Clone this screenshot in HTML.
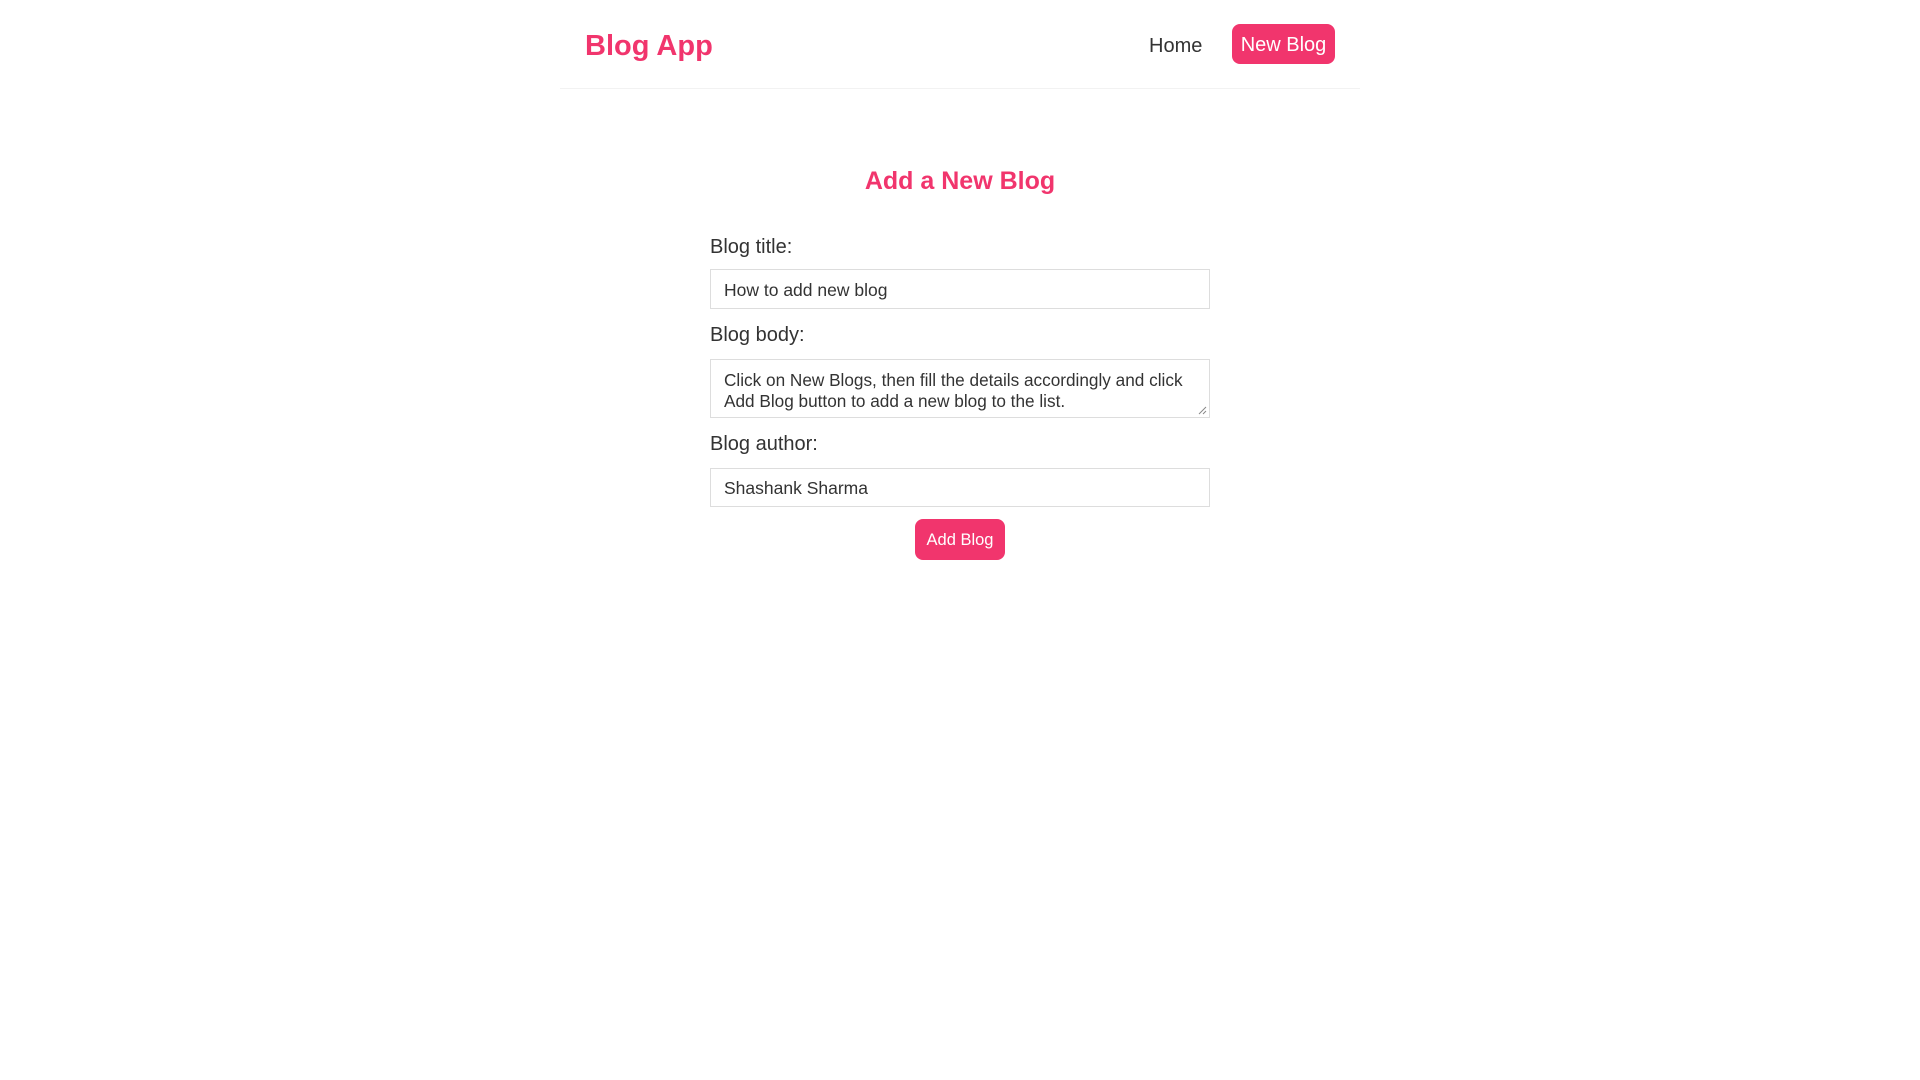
<!DOCTYPE html>
<html><head><meta charset="utf-8"><style>
*{box-sizing:border-box;margin:0;padding:0}
body{width:1920px;height:1080px;background:#fff;font-family:"Liberation Sans",sans-serif;color:#333;position:relative;overflow:hidden}
.a{position:absolute;white-space:nowrap}
.logo{left:585px;top:29px;font-size:29px;font-weight:bold;color:#f1356d;line-height:34px}
.home{left:1149px;top:34px;font-size:20px;line-height:24px;color:#333}
.nb{left:1232px;top:24px;width:103px;height:40px;background:#f1356d;border-radius:8px;color:#fff;font-size:20px;line-height:42px;text-align:center}
.line{left:560px;top:88px;width:800px;height:1px;background:#f2f2f2}
h2{position:absolute;left:0;width:1920px;text-align:center;top:166px;font-size:25px;line-height:30px;color:#f1356d}
.lbl{left:710px;font-size:20px;line-height:24px;color:#333}
.box{left:710px;width:500px;border:1px solid #ddd;font-size:17.5px;color:#333;padding:0 13px}
.btn{left:915px;top:519px;width:90px;height:41px;background:#f1356d;border-radius:8px;color:#fff;font-size:16.5px;line-height:43px;text-align:center}
</style></head><body>
<div class="a logo">Blog App</div>
<div class="a home">Home</div>
<div class="a nb">New Blog</div>
<div class="a line"></div>
<h2>Add a New Blog</h2>
<div class="a lbl" style="top:235px">Blog title:</div>
<div class="a box" style="top:269px;height:40px;line-height:40px">How to add new blog</div>
<div class="a lbl" style="top:323px">Blog body:</div>
<div class="a box" style="top:359px;height:59px;line-height:21px;padding-top:10px;font-size:17.2px">Click on New Blogs, then fill the details accordingly and click<br>Add Blog button to add a new blog to the list.
<svg style="position:absolute;right:2px;bottom:2px" width="10" height="10"><path d="M9 2L2 9M9 6L6 9" stroke="#888" stroke-width="1"/></svg></div>
<div class="a lbl" style="top:432px">Blog author:</div>
<div class="a box" style="top:468px;height:39px;line-height:39px">Shashank Sharma</div>
<div class="a btn">Add Blog</div>
</body></html>
